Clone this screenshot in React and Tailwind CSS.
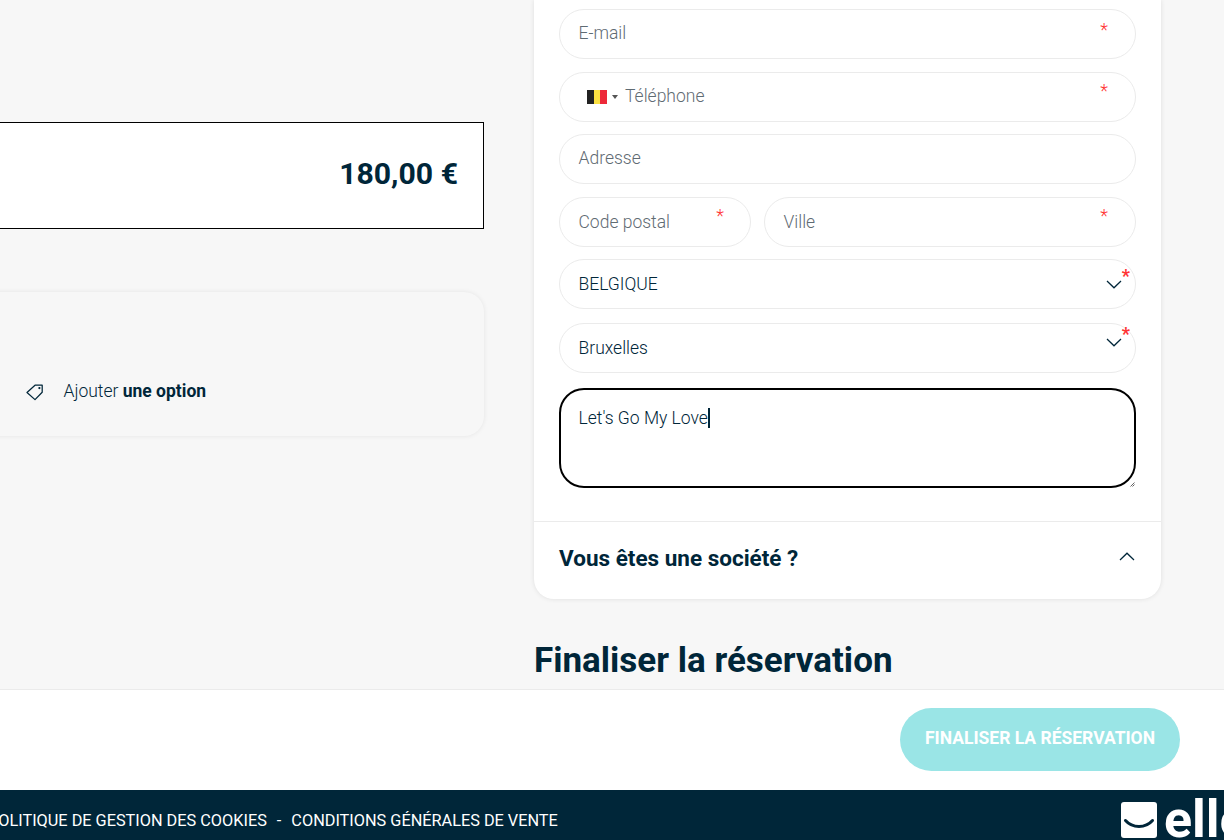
const pill = 'relative flex h-[50px] items-center rounded-[25px] border border-[#ebebeb] bg-white px-[18.5px] text-[17.5px] font-light'

function Star({ className }) {
  return <span className={`absolute text-[18px] leading-none text-[#f33] ${className}`}>*</span>
}

function Chevron({ up, className = '' }) {
  return (
    <svg width="16" height="9" viewBox="0 0 16 9" fill="none" stroke="currentColor" strokeWidth="1.25" className={className}>
      <path d={up ? 'M1 8 8 1.2 15 8' : 'M1 1l7 6.8L15 1'} />
    </svg>
  )
}

function Field({ label, star = 'right-[27px] top-[10px]', className = '' }) {
  return (
    <div className={`${pill} pb-[2px] text-[#5f6b73] ${className}`}>
      {label}
      {star && <Star className={star} />}
    </div>
  )
}

function SelectField({ value, chevron, star, className = '' }) {
  return (
    <div className={`${pill} pt-[1px] text-[#002639] ${className}`}>
      {value}
      <Chevron className={`absolute right-[13px] text-[#002639] ${chevron}`} />
      <Star className={`right-[5px] font-bold ${star}`} />
    </div>
  )
}

export default function App() {
  return (
    <div className="flex h-screen w-full flex-col overflow-hidden bg-[#f7f7f7] font-['Roboto',sans-serif] text-[#002639]">
      <main className="flex h-[689px] shrink-0 overflow-hidden">
        {/* left column, scrolled off the left edge */}
        <section className="ml-[-20px] w-[504px] shrink-0 pt-[122px]">
          <div className="flex h-[107px] items-center justify-end border border-black bg-white pb-[4px] pr-[25px] text-[30.2px] font-bold">
            180,00 €
          </div>
          <div className="mt-[63px] flex h-[144px] items-end rounded-[20px] bg-[#f7f7f7] pb-[35px] pl-[46px] shadow-[0_0_5px_rgba(0,0,0,0.08)]">
            <svg width="18" height="18" viewBox="0 0 18 18" fill="none" stroke="currentColor" strokeWidth="1.25" strokeLinejoin="round">
              <path d="M1 9.5 9 2.2h7.2v7L9 16.6z" />
              <circle cx="13.4" cy="5" r="0.5" fill="currentColor" />
            </svg>
            <span className="ml-[19.5px] text-[17.5px] font-light leading-[20px]">
              Ajouter <b className="font-bold">une option</b>
            </span>
          </div>
        </section>

        {/* right column */}
        <section className="ml-[50px] w-[627px] shrink-0">
          <div className="rounded-b-[20px] bg-white shadow-[0_0_5px_rgba(0,0,0,0.1)]">
            <div className="flex flex-col px-[25px] pt-[9px]">
              <Field label="E-mail" star="right-[27px] top-[11px]" />
              <div className={`${pill} mt-[13px] pb-[2px] text-[#5f6b73]`}>
                <div className="ml-[8.5px] mt-[2px] flex h-[14px] w-[20px] shadow-[inset_0_0_3px_rgba(0,0,0,0.25)]">
                  <span className="flex-1 bg-[#222]" />
                  <span className="flex-1 bg-[#fae042]" />
                  <span className="flex-1 bg-[#ed2939]" />
                </div>
                <span className="ml-[5px] mt-[2px] h-0 w-0 border-x-[3px] border-t-[4px] border-x-transparent border-t-[#555]" />
                <span className="ml-[7px]">Téléphone</span>
                <Star className="right-[27px] top-[9px]" />
              </div>
              <Field label="Adresse" star={null} className="mt-[12px]" />
              <div className="mt-[13px] flex gap-[13px]">
                <Field label="Code postal" star="right-[26px] top-[9px]" className="w-[192px] shrink-0 !pb-0" />
                <Field label="Ville" star="right-[27px] top-[9px]" className="flex-1 !pb-0" />
              </div>
              <SelectField value="BELGIQUE" chevron="top-[20px]" star="top-[7px]" className="mt-[12px]" />
              <SelectField value="Bruxelles" chevron="top-[14px]" star="top-[1px]" className="mt-[14px]" />
              <div className="relative mt-[15px] h-[100px] rounded-[25px] border-2 border-black px-[17.5px] pt-[17px] text-[17.5px] font-light leading-[22px]">
                Let's Go My Love<span className="inline-block h-[20px] w-[2px] bg-[#002639] align-[-4px]" />
                <svg width="7" height="7" viewBox="0 0 7 7" stroke="#666" strokeWidth="1" className="absolute bottom-[-1px] right-[-1px]">
                  <path d="M2.5 6.5l4-4M4.5 6.5l2-2" />
                </svg>
              </div>
            </div>
            <div className="mt-[33px] flex h-[78px] items-center justify-between border-t border-[#ebebeb] pb-[4px] pl-[25px] pr-[26px]">
              <span className="text-[22.5px] font-bold">Vous êtes une société ?</span>
              <Chevron up className="mb-[4px]" />
            </div>
          </div>
          <h2 className="mt-[38px] text-[35px] font-bold leading-[48px]">Finaliser la réservation</h2>
        </section>
      </main>

      <div className="flex h-[101px] shrink-0 items-start justify-end border-t border-[#ebebeb] bg-white pr-[44px] pt-[18px]">
        <button className="h-[63px] w-[280px] rounded-[32px] bg-[#9ae5e6] pb-[2px] text-[17.5px] font-bold text-white">
          FINALISER LA RÉSERVATION
        </button>
      </div>

      <footer className="flex h-[50px] shrink-0 items-center overflow-hidden bg-[#002639] text-white">
        <div className="ml-[-12px] mt-[12px] flex flex-1 gap-[10px] whitespace-nowrap text-[16.3px] font-normal">
          <span>POLITIQUE DE GESTION DES COOKIES</span>
          <span>-</span>
          <span>CONDITIONS GÉNÉRALES DE VENTE</span>
        </div>
        <div className="mr-[-30px] mt-[10px] flex w-[133px] shrink-0 items-center">
          <svg width="36" height="36" viewBox="0 0 36 36" className="shrink-0">
            <rect width="36" height="36" rx="3" fill="#fff" />
            <path d="M4.5 18.5c7 8 20 8 27 0" fill="none" stroke="#002639" strokeWidth="3" strokeLinecap="round" />
          </svg>
          <span className="ml-[7px] text-[52px] font-bold leading-[36px]">elle</span>
        </div>
      </footer>
    </div>
  )
}
